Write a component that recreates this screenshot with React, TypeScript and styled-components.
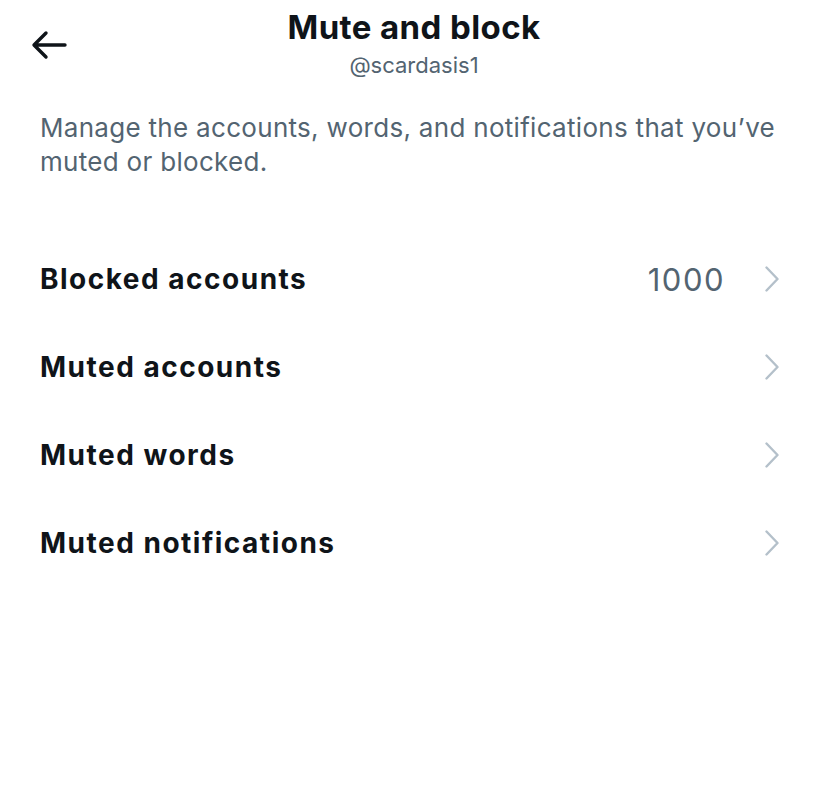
import React from "react";
import styled, { createGlobalStyle } from "styled-components";

const Global = createGlobalStyle`
  html, body { margin: 0; padding: 0; background: #ffffff; }
  body { font-family: Inter, "Noto Sans", "Liberation Sans", sans-serif; -webkit-font-smoothing: antialiased; }
`;

const Page = styled.div`
  width: 828px;
  height: 797px;
  background: #ffffff;
  display: flex;
  flex-direction: column;
`;

const Header = styled.header`
  display: grid;
  grid-template-columns: 80px 1fr 80px;
  align-items: start;
  padding-top: 8px;
`;

const BackButton = styled.button`
  border: 0;
  background: transparent;
  padding: 0;
  margin: 22px 0 0 30px;
  width: 38px;
  height: 30px;
  display: flex;
  align-items: center;
  justify-content: center;
  color: #0f1419;
  cursor: pointer;
`;

const TitleBlock = styled.div`
  display: flex;
  flex-direction: column;
  align-items: center;
`;

const Title = styled.h1`
  margin: 0;
  font-size: 33px;
  line-height: 38px;
  font-weight: 700;
  color: #0f1419;
  letter-spacing: 0.4px;
`;

const Handle = styled.div`
  margin-top: 5px;
  font-size: 22px;
  line-height: 28px;
  color: #536471;
`;

const Description = styled.p`
  margin: 32px 40px 0 40px;
  font-size: 26px;
  line-height: 34px;
  color: #536471;
  letter-spacing: 0.3px;
`;

const List = styled.ul`
  list-style: none;
  margin: 56px 0 0 0;
  padding: 0;
`;

const Row = styled.li`
  display: flex;
  align-items: center;
  height: 88px;
  padding: 0 49px 0 40px;
`;

const Label = styled.span`
  flex: 1;
  font-size: 28px;
  font-weight: 700;
  color: #0f1419;
  letter-spacing: 1.5px;
`;

const Count = styled.span`
  font-size: 31px;
  color: #536471;
  letter-spacing: 1.5px;
  margin-right: 40px;
`;

const Chevron = () => (
  <svg width="14" height="26" viewBox="0 0 14 26" fill="none">
    <path d="M1.5 1.5 L12.5 13 L1.5 24.5" stroke="#b4c0ca" strokeWidth="2.4" strokeLinecap="round" strokeLinejoin="round" />
  </svg>
);

const BackArrow = () => (
  <svg width="36" height="30" viewBox="0 0 36 30" fill="none">
    <path d="M34 15 H4 M15 3 L3 15 L15 27" stroke="currentColor" strokeWidth="3.4" strokeLinecap="round" strokeLinejoin="round" />
  </svg>
);

const items = [
  { label: "Blocked accounts", count: "1000" },
  { label: "Muted accounts" },
  { label: "Muted words" },
  { label: "Muted notifications" },
];

export default function App() {
  return (
    <Page>
      <Global />
      <Header>
        <BackButton aria-label="Back"><BackArrow /></BackButton>
        <TitleBlock>
          <Title>Mute and block</Title>
          <Handle>@scardasis1</Handle>
        </TitleBlock>
        <div />
      </Header>
      <Description>Manage the accounts, words, and notifications that you’ve muted or blocked.</Description>
      <List>
        {items.map((it) => (
          <Row key={it.label}>
            <Label>{it.label}</Label>
            {it.count && <Count>{it.count}</Count>}
            <Chevron />
          </Row>
        ))}
      </List>
    </Page>
  );
}
